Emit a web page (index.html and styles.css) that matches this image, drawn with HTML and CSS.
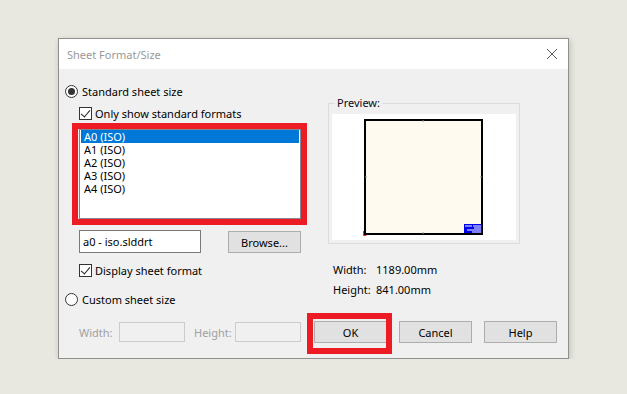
FILE: index.html
```html
<!DOCTYPE html>
<html lang="en">
<head>
  <meta charset="UTF-8" />
  <title>Sheet Format/Size</title>
  <link rel="stylesheet" href="styles.css">
</head>
<body>
  <div class="dialog">
    <div class="titlebar">
      <span class="title">Sheet Format/Size</span>
      <svg class="close" width="12" height="12" viewBox="0 0 12 12">
        <path d="M1 1 L11 11 M11 1 L1 11" stroke="#5a5a5a" stroke-width="1" fill="none"/>
      </svg>
    </div>

    <div class="content">
      <div class="main">
        <div class="left">
          <label class="row radio-row">
            <span class="radio checked"></span> Standard sheet size
          </label>
          <label class="row check-row indent">
            <span class="check on"></span> Only show standard formats
          </label>

          <ul class="listbox marked">
            <li class="selected">A0 (ISO)</li>
            <li>A1 (ISO)</li>
            <li>A2 (ISO)</li>
            <li>A3 (ISO)</li>
            <li>A4 (ISO)</li>
          </ul>

          <div class="file-row">
            <input class="field" type="text" value="a0 - iso.slddrt">
            <button class="btn browse">Browse...</button>
          </div>

          <label class="row check-row display">
            <span class="check on"></span> Display sheet format
          </label>

          <label class="row radio-row custom">
            <span class="radio"></span> Custom sheet size
          </label>
        </div>

        <div class="right">
          <fieldset class="preview">
            <legend>Preview:</legend>
            <div class="paper">
              <svg width="122" height="120" viewBox="0 0 122 120">
                <rect x="2" y="1" width="117" height="114" fill="#fffaf0" stroke="#000" stroke-width="2"/>
                <path d="M60 1 v2 M60 113 v2 M2 58 h2 M117 58 h2" stroke="#999" stroke-width="1"/>
                <rect x="101" y="105" width="18" height="9" fill="#0000f0"/>
                <path d="M102 107 h7 M110 107 h8 M111 109 h7 M104 111 h14 M109 113 h9" stroke="#fff" stroke-width="1"/>
                <path d="M0.5 112 v4.5 h3" stroke="#e03030" stroke-width="1" fill="none"/>
              </svg>
            </div>
          </fieldset>

          <div class="dims">
            <div class="dim"><span class="dim-key">Width:</span><span>1189.00mm</span></div>
            <div class="dim"><span class="dim-key">Height:</span><span>841.00mm</span></div>
          </div>
        </div>
      </div>

      <div class="footer">
        <div class="custom-size">
          <span class="off-label">Width:</span>
          <input class="field off" type="text" disabled>
          <span class="off-label height">Height:</span>
          <input class="field off" type="text" disabled>
        </div>
        <div class="buttons">
          <button class="btn ok marked">OK</button>
          <button class="btn">Cancel</button>
          <button class="btn">Help</button>
        </div>
      </div>
    </div>
  </div>
</body>
</html>
```

FILE: styles.css
```css
* {
  box-sizing: border-box;
}

body {
  margin: 0;
  padding: 38px 0 0 58px;
  background-color: #e8e8e0;
  font-family: 'Noto Sans', 'Open Sans', sans-serif;
  font-size: 11px;
  color: #000;
}

.dialog {
  width: 511px;
  height: 321px;
  border: 1px solid #8f8f8f;
  background-color: #f0f0f0;
  box-shadow: 1px 2px 6px rgba(0,0,0,0.18);
  display: flex;
  flex-direction: column;
}

.titlebar {
  height: 30px;
  background-color: #fff;
  display: flex;
  align-items: center;
  justify-content: space-between;
  padding: 0 10px 0 8px;
}

.title {
  color: #999;
  font-size: 11px;
}

.close {
  display: block;
}

.content {
  flex: 1;
  padding-left: 6px;
}

.main {
  display: flex;
}

.left {
  width: 263px;
}

.row {
  display: flex;
  align-items: center;
  height: 16px;
  gap: 4px;
  white-space: nowrap;
}

.radio-row {
  margin-top: 14px;
}

.radio {
  width: 13px;
  height: 13px;
  border: 1px solid #333;
  border-radius: 50%;
  background-color: #fff;
  display: flex;
  align-items: center;
  justify-content: center;
}

.radio.checked::before {
  content: "";
  width: 7px;
  height: 7px;
  border-radius: 50%;
  background-color: #333;
}

.check-row {
  margin-top: 6px;
  padding-left: 14px;
  gap: 3px;
}

.check {
  width: 13px;
  height: 13px;
  border: 1px solid #333;
  background-color: #fff;
  position: relative;
}

.check.on::before {
  content: "";
  position: absolute;
  left: 3px;
  top: 0px;
  width: 4px;
  height: 8px;
  border-right: 1.3px solid #222;
  border-bottom: 1.3px solid #222;
  transform: rotate(40deg);
}

.listbox {
  list-style: none;
  margin: 8px 0 0 14px;
  padding: 0 1px;
  width: 222px;
  height: 90px;
  border: 1px solid #828790;
  background-color: #fff;
  position: relative;
}

.listbox li {
  height: 13px;
  line-height: 13px;
  padding-left: 3px;
}

.listbox li.selected {
  background-color: #0078d7;
  color: #fff;
}

.marked::after {
  content: "";
  position: absolute;
  border: 6px solid #ed1c24;
  pointer-events: none;
}

.listbox.marked::after {
  top: -7px;
  left: -8px;
  right: -7px;
  bottom: -7px;
}

.file-row {
  display: flex;
  align-items: flex-start;
  margin: 11px 0 0 14px;
  width: 222px;
  justify-content: space-between;
}

.field {
  font: inherit;
  color: #000;
  width: 122px;
  height: 23px;
  border: 1px solid #7a7a7a;
  background-color: #fff;
  padding: 0 3px;
  margin: 0;
}

.btn {
  font: inherit;
  color: #000;
  width: 73px;
  height: 22px;
  border: 1px solid #adadad;
  background-color: #e1e1e1;
  padding: 0;
  margin: 0;
}

.browse {
  margin-top: 1px;
}

.display {
  margin-top: 9px;
}

.custom {
  margin-top: 13px;
}

.preview {
  margin: 26px 0 0 0;
  padding: 0 3px 2px 3px;
  width: 192px;
  height: 149px;
  border: 1px solid #dcdcdc;
}

.preview legend {
  padding: 0 2px;
  margin-left: 3px;
  font-size: 11px;
  line-height: 16px;
  color: #0a0a20;
}

.paper {
  background-color: #fff;
  height: 126px;
  margin-top: 3px;
  padding: 5px 0 0 31px;
}

.paper svg {
  display: block;
}

.dims {
  margin-top: 15px;
  padding-left: 5px;
}

.dim {
  display: flex;
  height: 20px;
  align-items: center;
}

.dim-key {
  width: 43px;
}

.footer {
  display: flex;
  align-items: center;
  margin-top: 14px;
}

.custom-size {
  display: flex;
  align-items: center;
  padding-left: 14px;
  width: 249px;
}

.off-label {
  color: #a0a0a0;
  width: 40px;
}

.off-label.height {
  margin-left: 9px;
  width: 41px;
}

.field.off {
  width: 66px;
  height: 20px;
  border-color: #cccccc;
  background-color: #f0f0f0;
}

.buttons {
  display: flex;
  gap: 12px;
}

.btn.ok {
  position: relative;
}

.btn.ok.marked::after {
  top: -9px;
  left: -8px;
  right: -6px;
  bottom: -12px;
}
```
